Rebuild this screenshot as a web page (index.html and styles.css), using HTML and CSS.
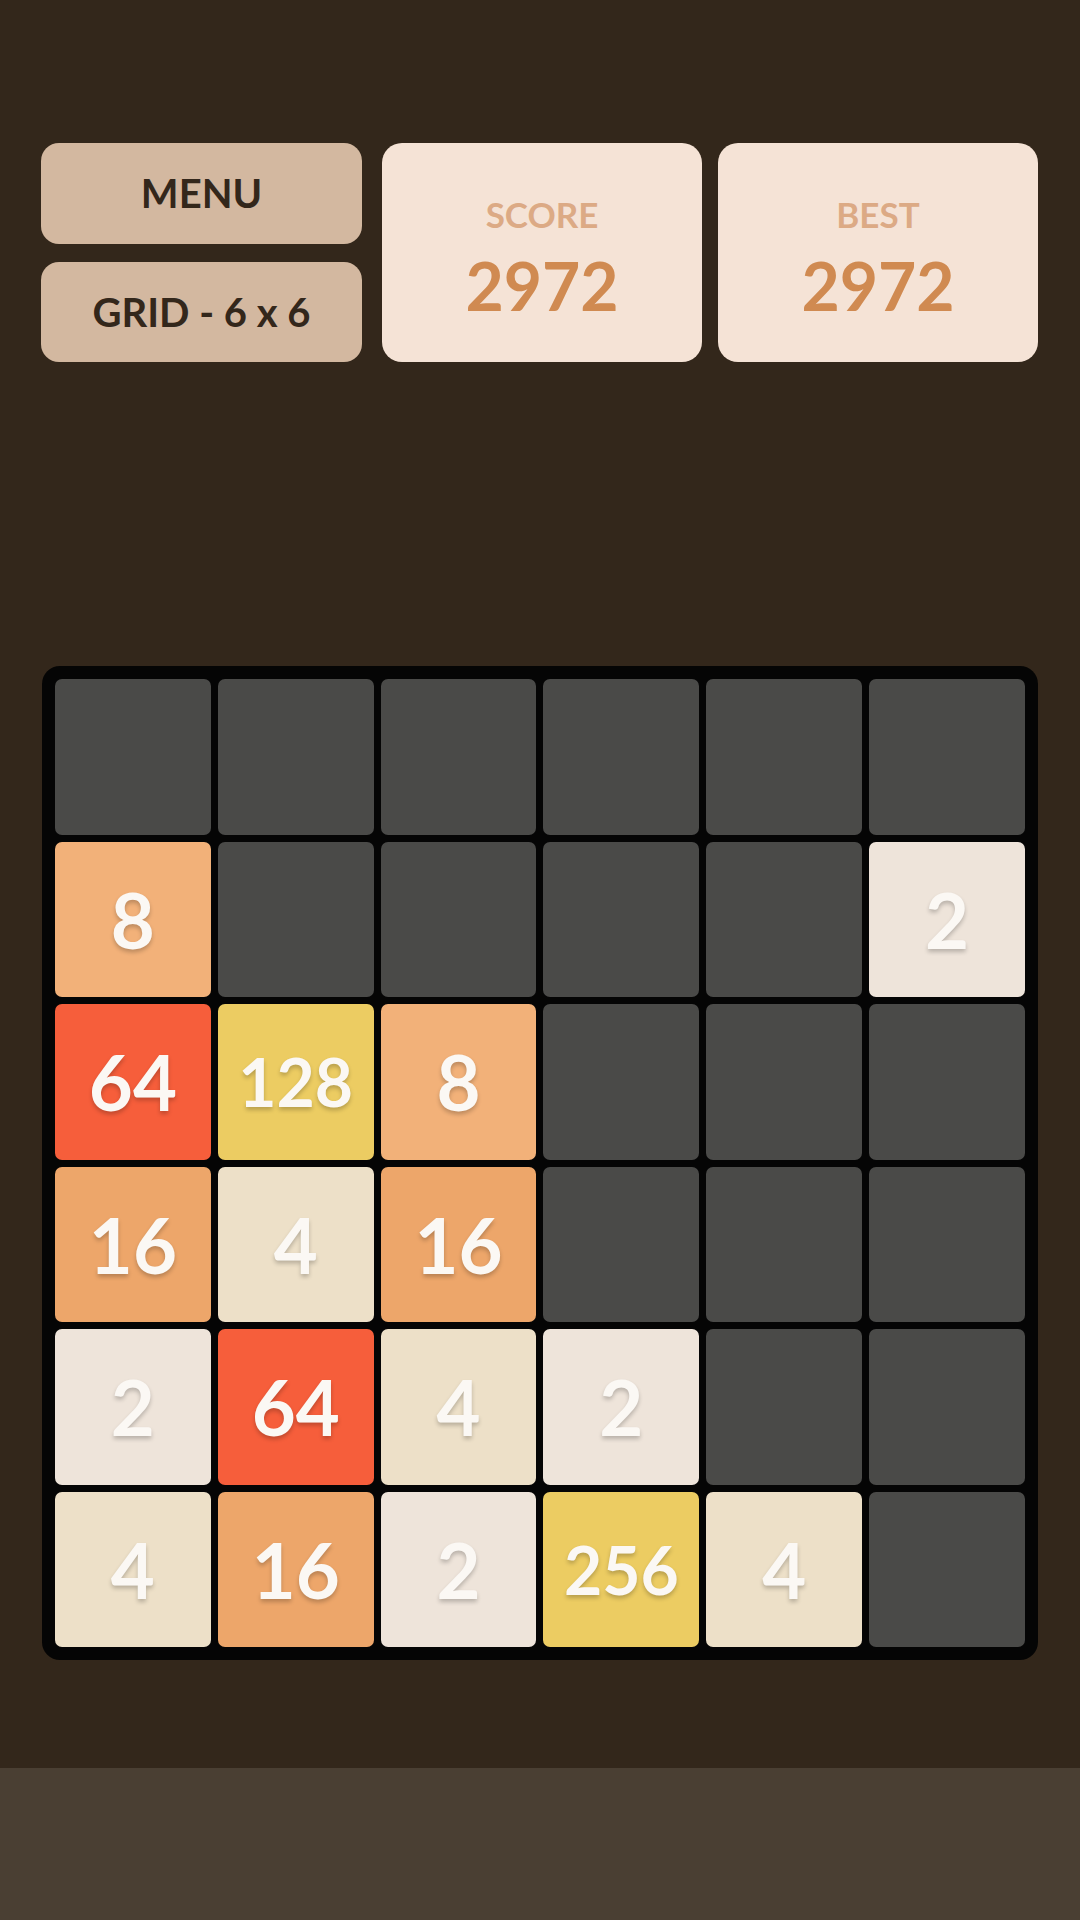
FILE: index.html
```html
<!DOCTYPE html>
<html lang="en">
<head>
  <meta charset="UTF-8" />
  <title>2048</title>
  <link rel="stylesheet" href="styles.css">
</head>
<body>
  <div class="screen">
    <header class="top">
      <div class="buttons">
        <button class="btn">MENU</button>
        <button class="btn">GRID - 6 x 6</button>
      </div>
      <div class="card card-score">
        <span class="card-label">SCORE</span>
        <span class="card-value" id="score">2972</span>
      </div>
      <div class="card">
        <span class="card-label">BEST</span>
        <span class="card-value" id="best">2972</span>
      </div>
    </header>

    <div class="board" id="board"></div>

    <div class="bottom-bar"></div>
  </div>

  <script>
    // 0 = empty cell
    const grid = [
      [0, 0, 0, 0, 0, 0],
      [8, 0, 0, 0, 0, 2],
      [64, 128, 8, 0, 0, 0],
      [16, 4, 16, 0, 0, 0],
      [2, 64, 4, 2, 0, 0],
      [4, 16, 2, 256, 4, 0]
    ];

    const board = document.getElementById('board');
    grid.forEach(row => {
      row.forEach(value => {
        const cell = document.createElement('div');
        cell.className = 'tile';
        if (value) {
          cell.classList.add('tile-' + value);
          cell.textContent = value;
          if (value >= 100) cell.classList.add('small');
        }
        board.appendChild(cell);
      });
    });
  </script>
</body>
</html>
```

FILE: styles.css
```css
:root {
  --bg: #33271b;
  --bar: #4a3f33;
  --btn: #d3b8a0;
  --card: #f5e3d6;
  --label: #dcaa85;
  --value: #d08a51;
  --board: #050505;
  --empty: #4a4a48;
}

* {
  box-sizing: border-box;
}

body {
  margin: 0;
  background: var(--bg);
  font-family: Lato, 'Open Sans', sans-serif;
}

.screen {
  width: 1080px;
  height: 1920px;
  display: flex;
  flex-direction: column;
  overflow: hidden;
}

.top {
  display: grid;
  grid-template-columns: 321px 324px 320px;
  column-gap: 16px;
  margin: 143px 42px 0 41px;
  height: 219px;
}

.buttons {
  display: flex;
  flex-direction: column;
  gap: 18px;
}

.btn {
  flex: 1;
  border: none;
  border-radius: 18px;
  background: var(--btn);
  color: var(--bg);
  font-family: inherit;
  font-weight: 700;
  font-size: 40px;
  padding: 0;
  cursor: pointer;
}

.card {
  background: var(--card);
  border-radius: 20px;
  display: flex;
  flex-direction: column;
  align-items: center;
  justify-content: center;
  gap: 18px;
  padding-top: 14px;
}

.card-score {
  margin-left: 4px;
}

.card-label {
  color: var(--label);
  font-size: 35px;
  font-weight: 700;
  line-height: 1;
}

.card-value {
  color: var(--value);
  font-size: 66px;
  font-weight: 700;
  line-height: 1.1;
}

.board {
  margin: 304px 42px 0 42px;
  height: 994px;
  background: var(--board);
  border-radius: 18px;
  padding: 13px;
  display: grid;
  grid-template-columns: repeat(6, 1fr);
  grid-template-rows: repeat(6, 1fr);
  gap: 7px;
}

.tile {
  background: var(--empty);
  border-radius: 7px;
  display: flex;
  align-items: center;
  justify-content: center;
  color: #fbf8f4;
  font-size: 76px;
  font-weight: 700;
  text-shadow: 0 3px 4px rgba(0, 0, 0, 0.22);
}

.tile.small {
  font-size: 66px;
}

.tile-2 { background: #eee4da; }
.tile-4 { background: #ede0c8; }
.tile-8 { background: #f2b179; }
.tile-16 { background: #eda66a; }
.tile-64 { background: #f65e3b; }
.tile-128 { background: #eccc62; }
.tile-256 { background: #eccc62; }

.bottom-bar {
  margin-top: auto;
  height: 152px;
  background: var(--bar);
}
```
